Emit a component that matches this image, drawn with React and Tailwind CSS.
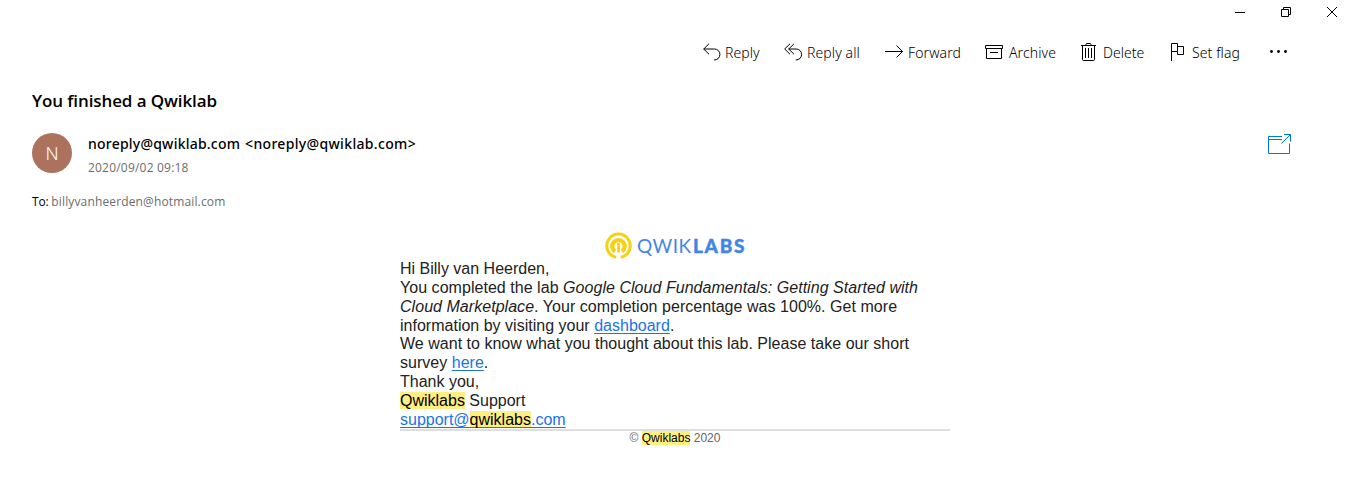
import React from "react";

const Svg = ({ w, h, className = "", children }) => (
  <svg width={w} height={h} viewBox={`0 0 ${w} ${h}`} fill="none" stroke="currentColor" className={`shrink-0 ${className}`}>
    {children}
  </svg>
);

const ReplyIcon = () => (
  <Svg w={18} h={20}>
    <path d="M6 .8.700 6l5.300 5.200M.7 6h10.800a5.400 5.400 0 0 1 5.400 5.500c0 3-2.300 5.500-5.900 5.500" />
  </Svg>
);
const ReplyAllIcon = () => (
  <Svg w={19} h={20}>
    <path d="M6 .8.700 6l5.300 5.200M10 .8 4.700 6l5.300 5.200M4.700 6h7.500a5.400 5.400 0 0 1 5.400 5.500c0 3-2.300 5.500-5.900 5.500" />
  </Svg>
);
const ForwardIcon = () => (
  <Svg w={19} h={20}>
    <path d="M0 8.500h17.500M11.500 2.500l6 6-6 6" />
  </Svg>
);
const ArchiveIcon = () => (
  <Svg w={18} h={20}>
    <path d="M.5 2.500h17v3H.5zM1.500 5.500v10h15v-10M5 9.500h8" />
  </Svg>
);
const DeleteIcon = () => (
  <Svg w={15} h={20}>
    <path d="M0 2.500h15M1.500 2.500v14q0 1 1 1h10q1 0 1-1v-14M5 2.500v-1q0-1 1-1h3q1 0 1 1v1M4.500 5v10M7.500 5v10M10.500 5v10" />
  </Svg>
);
const FlagIcon = () => (
  <Svg w={14} h={20}>
    <path d="M.5 18V.5h6v8h-6M6.500 3.500h6v8h-6v-3" />
  </Svg>
);

const actions = [
  { label: "Reply", Icon: ReplyIcon, box: "w-[81px]", slot: "w-[22px]", track: "tracking-[0.05px]" },
  { label: "Reply all", Icon: ReplyAllIcon, box: "w-[101px]", slot: "w-[23px]", track: "tracking-[0.1px]" },
  { label: "Forward", Icon: ForwardIcon, box: "w-[100px]", slot: "w-[23px]", track: "tracking-[0.1px]" },
  { label: "Archive", Icon: ArchiveIcon, box: "w-[96px]", slot: "w-[24px]", track: "tracking-[0.1px]" },
  { label: "Delete", Icon: DeleteIcon, box: "w-[90px]", slot: "w-[22px]", track: "tracking-[0px]" },
  { label: "Set flag", Icon: FlagIcon, box: "w-[98px]", slot: "w-[21px]", track: "tracking-[0.1px]" },
];

const WindowControls = () => (
  <div className="flex h-6 justify-end pl-4 pr-[17px] text-black">
    <button className="mr-[34px]" aria-label="Minimize"><Svg w={12} h={24}><path d="M1 12.500h10" /></Svg></button>
    <button className="mr-[34px]" aria-label="Restore"><Svg w={12} h={24}><path d="M1.500 9.500h7v7h-7zM3.500 9.500v-2h7v7h-2" /></Svg></button>
    <button aria-label="Close"><Svg w={12} h={24}><path d="m1 7 10 10M11 7 1 17" /></Svg></button>
  </div>
);

const Toolbar = () => (
  <div className="flex h-14 items-center justify-end pr-[67px] pt-0.5 text-black">
    {actions.map(({ label, Icon, box, slot, track }) => (
      <button key={label} className={`flex items-center whitespace-nowrap text-left ${box}`}>
        <span className={`shrink-0 ${slot}`}><Icon /></span>
        <span className={`font-['Noto_Sans','Open_Sans',sans-serif] text-[14px] leading-5 font-light ${track}`}>{label}</span>
      </button>
    ))}
    <button aria-label="More">
      <svg width="19" height="20" fill="currentColor"><circle cx="2.500" cy="8.500" r="1.400" /><circle cx="9.500" cy="8.500" r="1.400" /><circle cx="16.500" cy="8.500" r="1.400" /></svg>
    </button>
  </div>
);

const Mark = ({ children }) => <span className="bg-[#ffee80] text-black">{children}</span>;
const Link = ({ children }) => (
  <a className="text-[#1a73e8] underline decoration-1 underline-offset-2 [text-decoration-skip-ink:none]">{children}</a>
);

const Logo = () => (
  <div className="flex h-7 items-center justify-center text-[#4285e8]">
    <svg width="28" height="28" viewBox="0 0 28 28" fill="none" stroke="#f8d012" className="shrink-0">
      <path d="M11.300 25.300A11.700 11.700 0 1 1 15.700 25.300" strokeWidth="3" />
      <path d="M10 19.400A6.200 6.200 0 1 1 17 19.400" strokeWidth="4.200" />
      <path d="M13.500 11v9.500" strokeWidth="2.600" />
    </svg>
    <span className="ml-[4px] flex font-['Lato',sans-serif] text-[19px] leading-7">
      <span className="w-[56px] tracking-[0.500px]">QWIK</span>
      <span className="w-[52px] font-black tracking-[1.700px] [-webkit-text-stroke:0.400px_#4285e8]">LABS</span>
    </span>
  </div>
);

export default function App() {
  return (
    <div className="h-[479px] w-[1355px] overflow-hidden bg-white font-['Open_Sans','Noto_Sans',sans-serif]">
      <WindowControls />
      <Toolbar />
      <header className="pl-8 pr-[63px] text-black">
        <h1 className="h-[53px] pt-[9px] text-[17px] leading-6 font-semibold tracking-[-0.1px]">You finished a Qwiklab</h1>
        <div className="flex items-start">
          <div className="flex size-10 items-center justify-center rounded-full bg-[#ad725d] font-['Noto_Sans',sans-serif] text-[18px] font-light text-white">N</div>
          <div className="ml-4 flex-1">
            <div className="h-[24px] font-['Noto_Sans',sans-serif] text-[14px] leading-[22px] font-medium tracking-[0.220px] [word-spacing:1px]">noreply@qwiklab.com <span className="tracking-[0.330px]">&lt;noreply@qwiklab.com&gt;</span></div>
            <div className="text-[12px] leading-[22px] tracking-[0.200px] text-[#6d6d6d]">2020/09/02 09:18</div>
          </div>
          <button className="text-[#0078d7]" aria-label="Open in new window">
            <Svg w={24} h={24}><path d="M14 3.500H.5v17h21v-10M.5 6.500H14M13.500 10.500 22.500 1.500M16 1.500h6.500V8.500" /></Svg>
          </button>
        </div>
        <div className="mt-[13px] h-[40px] text-[12px] leading-[20px] tracking-[0.140px]"><span className="tracking-[-0.200px]">To: </span><span className="text-[#6d6d6d]">billyvanheerden@hotmail.com</span></div>
      </header>
      <main className="ml-[400px] w-[550px] font-['Liberation_Sans',Arial,sans-serif]">
        <Logo />
        <div className="h-[169px] text-[16px] leading-[18.840px] text-[#222]">
          <p>Hi Billy van Heerden,</p>
          <p className="tracking-[0.04px]">You completed the lab <em>Google Cloud Fundamentals: Getting Started with Cloud Marketplace</em>. Your completion percentage was 100%. Get more <span className="tracking-[0.010px]">information by visiting your <Link>dashboard</Link>.</span></p>
          <p className="tracking-[0.02px]">We want to know what you thought about this lab. Please take our short survey <Link>here</Link>.</p>
          <p>Thank you,</p>
          <p><Mark>Qwiklabs</Mark> Support</p>
          <p><Link>support@<Mark>qwiklabs</Mark>.com</Link></p>
        </div>
        <footer className="border-t-2 border-[#dddfe3] text-center text-[12px] leading-[14px] text-[#5f6368]">© <Mark>Qwiklabs</Mark> 2020</footer>
      </main>
    </div>
  );
}
